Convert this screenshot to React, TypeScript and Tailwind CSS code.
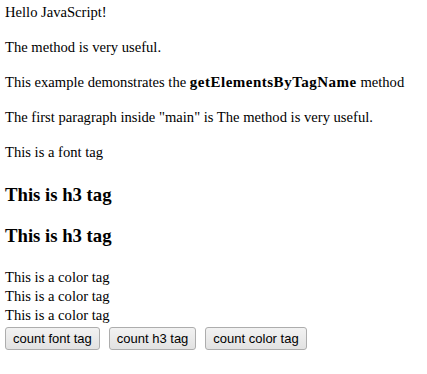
import React from "react";

const Btn = ({ children }: { children: React.ReactNode }) => (
  <button className="h-[23px] px-[7px] border border-[#adadad] rounded-[3px] bg-gradient-to-b from-[#f2f2f2] to-[#e2e2e2] text-[13px] leading-[15px] text-black [font-family:'Liberation_Sans',Arial,sans-serif]">
    {children}
  </button>
);

export default function App() {
  return (
    <div className="bg-white min-h-[374px] w-[427px] px-[5px] pt-[3px] text-black text-[14.6px] leading-[19px] [font-family:'Liberation_Serif','Times_New_Roman',serif]">
      <div>Hello JavaScript!</div>
      <p className="mt-[16px]">The method is very useful.</p>
      <p className="mt-[16px]">
        This example demonstrates the <b className="text-[15px] tracking-[0.5px]">getElementsByTagName</b> method
      </p>
      <p className="mt-[16px]">The first paragraph inside "main" is The method is very useful.</p>
      <p className="mt-[16px]">This is a font tag</p>
      <h3 className="mt-[22px] text-[18.72px] leading-[22px] font-bold">This is h3 tag</h3>
      <h3 className="mt-[19px] text-[18.72px] leading-[22px] font-bold">This is h3 tag</h3>
      <div className="mt-[21px]">This is a color tag</div>
      <div>This is a color tag</div>
      <div>This is a color tag</div>
      <div className="flex gap-[9px] mt-[2px]">
        <Btn>count font tag</Btn>
        <Btn>count h3 tag</Btn>
        <Btn>count color tag</Btn>
      </div>
    </div>
  );
}
